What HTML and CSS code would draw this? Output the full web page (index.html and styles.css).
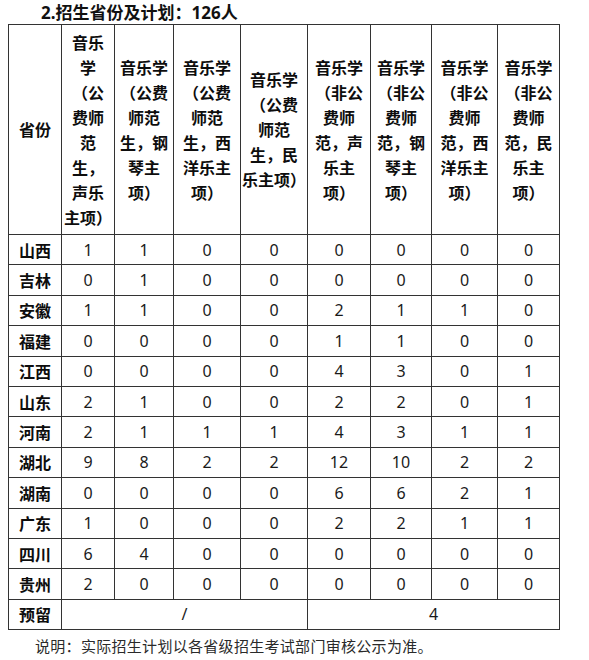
FILE: index.html
```html
<!DOCTYPE html>
<html lang="zh-CN">
<head>
<meta charset="utf-8">
<title>招生省份及计划</title>
<link rel="stylesheet" href="styles.css">
</head>
<body>
<div class="title">2.招生省份及计划：126人</div>
<table class="plan">
  <colgroup>
    <col class="c1"><col class="c2"><col class="c3"><col class="c4"><col class="c5">
    <col class="c6"><col class="c7"><col class="c8"><col class="c9">
  </colgroup>
  <thead>
    <tr>
      <th>省份</th>
      <th>音乐<br>学<br>（公<br>费师<br>范<br>生，<br>声乐<br>主项）</th>
      <th>音乐学<br>（公费<br>师范<br>生，钢<br>琴主<br>项）</th>
      <th>音乐学<br>（公费<br>师范<br>生，西<br>洋乐主<br>项）</th>
      <th>音乐学<br>（公费<br>师范<br>生，民<br>乐主项）</th>
      <th>音乐学<br>（非公<br>费师<br>范，声<br>乐主<br>项）</th>
      <th>音乐学<br>（非公<br>费师<br>范，钢<br>琴主<br>项）</th>
      <th>音乐学<br>（非公<br>费师<br>范，西<br>洋乐主<br>项）</th>
      <th>音乐学<br>（非公<br>费师<br>范，民<br>乐主<br>项）</th>
    </tr>
  </thead>
  <tbody>
    <tr><th>山西</th><td>1</td><td>1</td><td>0</td><td>0</td><td>0</td><td>0</td><td>0</td><td>0</td></tr>
    <tr><th>吉林</th><td>0</td><td>1</td><td>0</td><td>0</td><td>0</td><td>0</td><td>0</td><td>0</td></tr>
    <tr><th>安徽</th><td>1</td><td>1</td><td>0</td><td>0</td><td>2</td><td>1</td><td>1</td><td>0</td></tr>
    <tr><th>福建</th><td>0</td><td>0</td><td>0</td><td>0</td><td>1</td><td>1</td><td>0</td><td>0</td></tr>
    <tr><th>江西</th><td>0</td><td>0</td><td>0</td><td>0</td><td>4</td><td>3</td><td>0</td><td>1</td></tr>
    <tr><th>山东</th><td>2</td><td>1</td><td>0</td><td>0</td><td>2</td><td>2</td><td>0</td><td>1</td></tr>
    <tr><th>河南</th><td>2</td><td>1</td><td>1</td><td>1</td><td>4</td><td>3</td><td>1</td><td>1</td></tr>
    <tr><th>湖北</th><td>9</td><td>8</td><td>2</td><td>2</td><td>12</td><td>10</td><td>2</td><td>2</td></tr>
    <tr><th>湖南</th><td>0</td><td>0</td><td>0</td><td>0</td><td>6</td><td>6</td><td>2</td><td>1</td></tr>
    <tr><th>广东</th><td>1</td><td>0</td><td>0</td><td>0</td><td>2</td><td>2</td><td>1</td><td>1</td></tr>
    <tr><th>四川</th><td>6</td><td>4</td><td>0</td><td>0</td><td>0</td><td>0</td><td>0</td><td>0</td></tr>
    <tr><th>贵州</th><td>2</td><td>0</td><td>0</td><td>0</td><td>0</td><td>0</td><td>0</td><td>0</td></tr>
    <tr><th>预留</th><td colspan="4">/</td><td colspan="4">4</td></tr>
  </tbody>
</table>
<p class="note">说明：实际招生计划以各省级招生考试部门审核公示为准。</p>
</body>
</html>
```

FILE: styles.css
```css
html, body {
  margin: 0;
  padding: 0;
  background: #ffffff;
}

body {
  color: #111111;
  font-family: "Noto Sans CJK SC", "Noto Sans", sans-serif;
}

.title {
  height: 24px;
  line-height: 26px;
  padding-left: 41px;
  font-size: 17px;
  font-weight: 700;
  font-family: "Noto Sans", "Noto Sans CJK SC", sans-serif;
  color: #111111;
}

.plan {
  margin-left: 8px;
  border-collapse: collapse;
  table-layout: fixed;
  width: 552px;
}

.c1 { width: 53px; }
.c2 { width: 53px; }
.c3 { width: 59px; }
.c4 { width: 67px; }
.c5 { width: 67px; }
.c6 { width: 63px; }
.c7 { width: 61px; }
.c8 { width: 66px; }
.c9 { width: 62px; }

.plan th,
.plan td {
  border: 1px solid #333333;
  padding: 0;
  text-align: center;
  vertical-align: middle;
}

.plan thead th {
  height: 209px;
  font-size: 16px;
  font-weight: 700;
  line-height: 25px;
  white-space: nowrap;
  font-family: "Noto Sans CJK SC", sans-serif;
  color: #0d0d0d;
}

.plan tbody th {
  height: 29.4px;
  font-size: 16px;
  font-weight: 700;
  font-family: "Noto Sans CJK SC", sans-serif;
  color: #0d0d0d;
}

.plan tbody td {
  height: 29.4px;
  font-size: 16px;
  font-family: "Noto Sans", "Open Sans", sans-serif;
  color: #1a1a1a;
}

.note {
  margin: 0;
  padding-left: 35px;
  padding-top: 5px;
  font-size: 15px;
  line-height: 22px;
  letter-spacing: 0.3px;
  color: #2a2a2a;
  font-family: "Noto Sans CJK SC", sans-serif;
  font-weight: 400;
}
```
